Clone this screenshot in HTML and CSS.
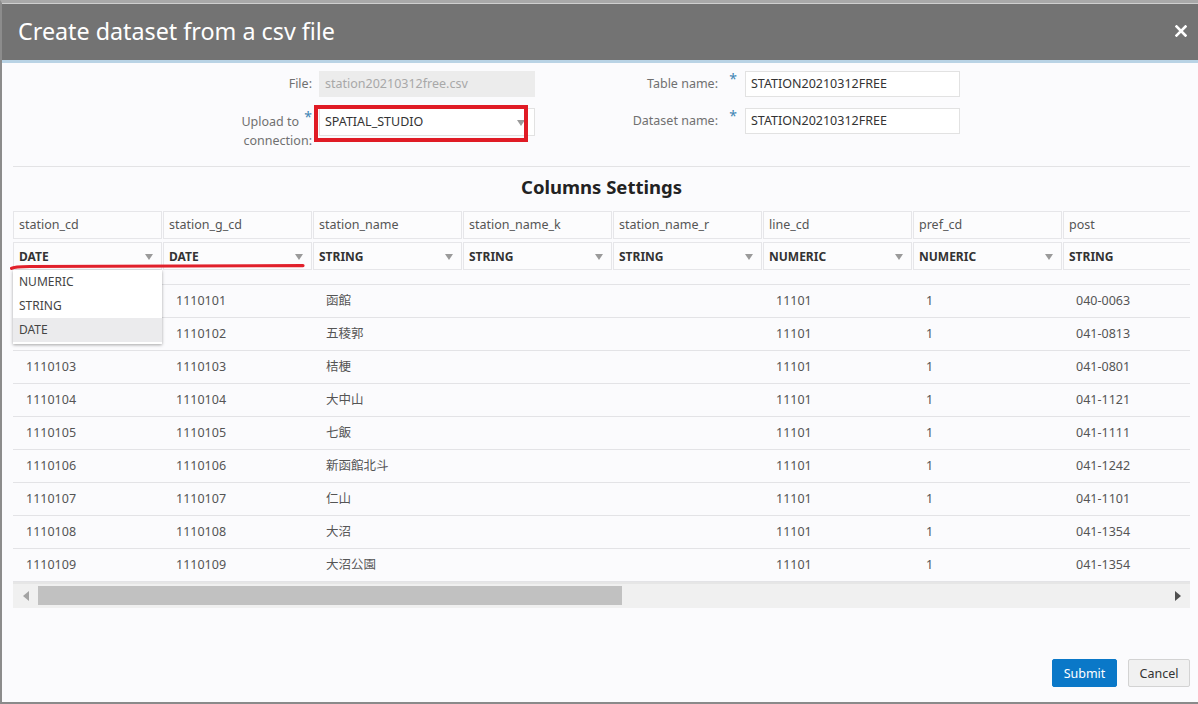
FILE: index.html
```html
<!DOCTYPE html>
<html lang="ja">
<head>
<meta charset="utf-8">
<title>Create dataset from a csv file</title>
<link rel="stylesheet" href="styles.css">
</head>
<body>
<div class="dialog">
  <div class="titlebar">
    <h1 class="title">Create dataset from a csv file</h1>
    <button class="close" aria-label="Close">
      <svg width="12" height="12" viewBox="0 0 12 12"><path d="M1.5 1.5 L10.5 10.5 M10.5 1.5 L1.5 10.5" stroke="#fff" stroke-width="2.6" stroke-linecap="square"/></svg>
    </button>
  </div>

  <div class="content">
    <div class="form">
      <div class="lbl l1">File:</div>
      <div class="field f1 disabled">station20210312free.csv</div>
      <div class="lbl r1">Table name:</div>
      <div class="req rq1">*</div>
      <div class="field fr1">STATION20210312FREE</div>

      <div class="lbl l2 two">Upload to <span class="req-in">*</span><br>connection:</div>
      <div class="field f2 select">SPATIAL_STUDIO<span class="caret"></span><span class="mark-box"></span></div>
      <div class="lbl r2">Dataset name:</div>
      <div class="req rq2">*</div>
      <div class="field fr2">STATION20210312FREE</div>
    </div>

    <div class="sep"></div>
    <h2 class="section">Columns Settings</h2>

    <div class="grid">
      <div class="inner">
        <div class="hrow names">
          <div class="hcell">station_cd</div>
          <div class="hcell">station_g_cd</div>
          <div class="hcell">station_name</div>
          <div class="hcell">station_name_k</div>
          <div class="hcell">station_name_r</div>
          <div class="hcell">line_cd</div>
          <div class="hcell">pref_cd</div>
          <div class="hcell">post</div>
        </div>
        <div class="hrow types">
          <div class="hcell type">DATE<span class="caret"></span></div>
          <div class="hcell type">DATE<span class="caret"></span></div>
          <div class="hcell type">STRING<span class="caret"></span></div>
          <div class="hcell type">STRING<span class="caret"></span></div>
          <div class="hcell type">STRING<span class="caret"></span></div>
          <div class="hcell type">NUMERIC<span class="caret"></span></div>
          <div class="hcell type">NUMERIC<span class="caret"></span></div>
          <div class="hcell type">STRING<span class="caret"></span></div>
        </div>
        <div class="rows">
          <div class="row"><div class="c covered">1110101</div><div class="c">1110101</div><div class="c">函館</div><div class="c"></div><div class="c"></div><div class="c">11101</div><div class="c">1</div><div class="c">040-0063</div></div>
          <div class="row"><div class="c covered">1110102</div><div class="c">1110102</div><div class="c">五稜郭</div><div class="c"></div><div class="c"></div><div class="c">11101</div><div class="c">1</div><div class="c">041-0813</div></div>
          <div class="row"><div class="c">1110103</div><div class="c">1110103</div><div class="c">桔梗</div><div class="c"></div><div class="c"></div><div class="c">11101</div><div class="c">1</div><div class="c">041-0801</div></div>
          <div class="row"><div class="c">1110104</div><div class="c">1110104</div><div class="c">大中山</div><div class="c"></div><div class="c"></div><div class="c">11101</div><div class="c">1</div><div class="c">041-1121</div></div>
          <div class="row"><div class="c">1110105</div><div class="c">1110105</div><div class="c">七飯</div><div class="c"></div><div class="c"></div><div class="c">11101</div><div class="c">1</div><div class="c">041-1111</div></div>
          <div class="row"><div class="c">1110106</div><div class="c">1110106</div><div class="c">新函館北斗</div><div class="c"></div><div class="c"></div><div class="c">11101</div><div class="c">1</div><div class="c">041-1242</div></div>
          <div class="row"><div class="c">1110107</div><div class="c">1110107</div><div class="c">仁山</div><div class="c"></div><div class="c"></div><div class="c">11101</div><div class="c">1</div><div class="c">041-1101</div></div>
          <div class="row"><div class="c">1110108</div><div class="c">1110108</div><div class="c">大沼</div><div class="c"></div><div class="c"></div><div class="c">11101</div><div class="c">1</div><div class="c">041-1354</div></div>
          <div class="row"><div class="c">1110109</div><div class="c">1110109</div><div class="c">大沼公園</div><div class="c"></div><div class="c"></div><div class="c">11101</div><div class="c">1</div><div class="c">041-1354</div></div>
        </div>
      </div>

      <ul class="menu">
        <li>NUMERIC</li>
        <li>STRING</li>
        <li class="active">DATE</li>
      </ul>
      <svg class="underline" width="300" height="8" viewBox="0 0 300 8"><path d="M1.5 5.4 Q 4 3.6 20 3.5 L 293 2.6" fill="none" stroke="#e1202b" stroke-width="3.2" stroke-linecap="round"/></svg>
    </div>

    <div class="scrollbar">
      <div class="sb-btn left"><span class="tri-l"></span></div>
      <div class="sb-track"><div class="sb-thumb"></div></div>
      <div class="sb-btn right"><span class="tri-r"></span></div>
    </div>

    <div class="footer">
      <button class="btn primary">Submit</button>
      <button class="btn cancel">Cancel</button>
    </div>
  </div>
</div>
</body>
</html>
```

FILE: styles.css
```css
* { box-sizing: border-box; }
html, body { margin: 0; padding: 0; }
body {
  width: 1198px;
  height: 704px;
  overflow: hidden;
  background: #fbfbfd;
  font-family: "Noto Sans", "Noto Sans CJK JP", sans-serif;
  color: #444;
}
.dialog {
  height: 704px;
  border-top: 3px solid #a9a9a9;
  border-left: 2px solid #8c8c8c;
  border-bottom: 2px solid #8a8a8a;
  display: flex;
  flex-direction: column;
  background: #fbfbfd;
}
.titlebar {
  height: 60px;
  background: #737373;
  border-top: 1px solid #cfcfcf;
  border-bottom: 3px solid #b9d3e5;
  display: flex;
  align-items: center;
  justify-content: space-between;
  padding: 0 11px 0 16px;
}
.title {
  margin: 0;
  font-size: 23.3px;
  font-weight: 400;
  color: #fff;
  letter-spacing: 0;
  position: relative;
  top: -1px;
}
.close {
  background: none;
  border: 0;
  padding: 0;
  width: 12px;
  height: 12px;
  display: block;
  position: relative;
  top: -1px;
}
.close svg { display: block; }
.content {
  flex: 1;
  display: flex;
  flex-direction: column;
  padding: 8px 8px 15px 11px;
}

/* form */
.form {
  display: grid;
  grid-template-columns: 299px 7px 216px 186px 24px 215px;
  grid-template-rows: 26px 26px;
  row-gap: 11px;
  font-size: 12.5px;
  height: 95px;
}
.lbl {
  color: #707070;
  text-align: right;
  line-height: 26px;
  white-space: nowrap;
}
.l1 { grid-column: 1; grid-row: 1; }
.f1 { grid-column: 3; grid-row: 1; }
.r1 { grid-column: 4; grid-row: 1; }
.rq1 { grid-column: 5; grid-row: 1; }
.fr1 { grid-column: 6; grid-row: 1; }
.l2 { grid-column: 1; grid-row: 2; }
.f2 { grid-column: 3; grid-row: 2; }
.r2 { grid-column: 4; grid-row: 2; }
.rq2 { grid-column: 5; grid-row: 2; }
.fr2 { grid-column: 6; grid-row: 2; }
.r1, .r2 { padding-right: 3px; }
.lbl.two {
  line-height: 19px;
  padding-top: 4px;
  padding-right: 0;
}
.req, .req-in {
  color: #3f86b4;
  font-size: 14px;
  line-height: 14px;
}
.req { text-align: center; padding-top: 1px; }
.req-in { position: relative; top: -4px; margin-left: 2px; }
.field {
  background: #fff;
  border: 1px solid #e2e2e2;
  line-height: 24px;
  padding-left: 5px;
  color: #333;
  position: relative;
}
.field.disabled {
  background: #ececec;
  border-color: #ececec;
  color: #a8a8a8;
}
.field.select { height: 28px; line-height: 26px; }
.caret {
  position: absolute;
  right: 9px;
  top: 50%;
  margin-top: -2px;
  border-left: 4.5px solid transparent;
  border-right: 4.5px solid transparent;
  border-top: 6px solid #9a9a9a;
}
.mark-box {
  position: absolute;
  left: -6px;
  top: -4px;
  width: 214px;
  height: 37px;
  border: 4px solid #e01b25;
}

.sep {
  height: 1px;
  background: #e3e3e5;
}
.section {
  margin: 0;
  text-align: center;
  font-size: 18.5px;
  font-weight: 700;
  color: #222;
  line-height: 22px;
  margin-top: 9px;
  margin-bottom: 13px;
}

/* grid */
.grid {
  position: relative;
  width: 1177px;
}
.inner {
  width: 1177px;
  overflow: hidden;
}
.hrow {
  display: flex;
  width: 1200px;
}
.hcell {
  flex: 0 0 149px;
  margin-right: 1px;
  height: 28px;
  border: 1px solid #e6e6e9;
  background: #fcfcfd;
  padding-left: 5px;
  line-height: 25px;
  font-size: 12.5px;
  color: #555;
  position: relative;
  white-space: nowrap;
}
.types { margin-top: 3px; }
.hcell.type {
  font-weight: 700;
  color: #333;
  font-size: 12px;
  line-height: 27px;
}
.hcell.type .caret { right: 8px; }
.rows {
  margin-top: 14px;
  width: 1200px;
  border-top: 1px solid #e3e3e6;
}
.row {
  display: flex;
  height: 33px;
  border-bottom: 1px solid #e3e3e6;
}
.c {
  flex: 0 0 150px;
  padding-left: 13px;
  line-height: 32px;
  font-size: 12.5px;
  color: #555;
  white-space: nowrap;
}
.c.covered { visibility: hidden; }
.menu {
  position: absolute;
  left: 0;
  top: 59px;
  width: 149px;
  margin: 0;
  padding: 0 0 2px;
  list-style: none;
  background: #fff;
  box-shadow: 0 1px 3px rgba(0,0,0,0.35);
}
.menu li {
  height: 24px;
  line-height: 24px;
  padding-left: 6px;
  font-size: 12px;
  color: #444;
}
.menu li.active { background: #ebebed; }
.underline {
  position: absolute;
  left: -3px;
  top: 52px;
}

/* scrollbar */
.scrollbar {
  display: flex;
  width: 1177px;
  height: 26px;
  background: #f0f0f0;
  border-top: 2px solid #e6e6e6;
}
.sb-btn {
  flex: 0 0 25px;
  display: flex;
  align-items: center;
  justify-content: center;
}
.sb-track { flex: 1; padding: 2px 0 3px; }
.sb-thumb { width: 584px; height: 100%; background: #c1c1c1; }
.tri-l {
  border-top: 5px solid transparent;
  border-bottom: 5px solid transparent;
  border-right: 6px solid #a3a3a3;
}
.tri-r {
  border-top: 5px solid transparent;
  border-bottom: 5px solid transparent;
  border-left: 6px solid #505050;
}

/* footer */
.footer {
  margin-top: auto;
  display: flex;
  justify-content: flex-end;
  gap: 11px;
}
.btn {
  height: 28px;
  padding: 0;
  border: 1px solid #d3d3d3;
  background: #f1f1f1;
  color: #333;
  font-family: "Noto Sans", "Noto Sans CJK JP", sans-serif;
  font-size: 12.5px;
  border-radius: 2px;
}
.btn.primary {
  width: 65px;
  background: #0a78c8;
  border-color: #0a78c8;
  color: #fff;
}
.btn.cancel { width: 62px; }
```
